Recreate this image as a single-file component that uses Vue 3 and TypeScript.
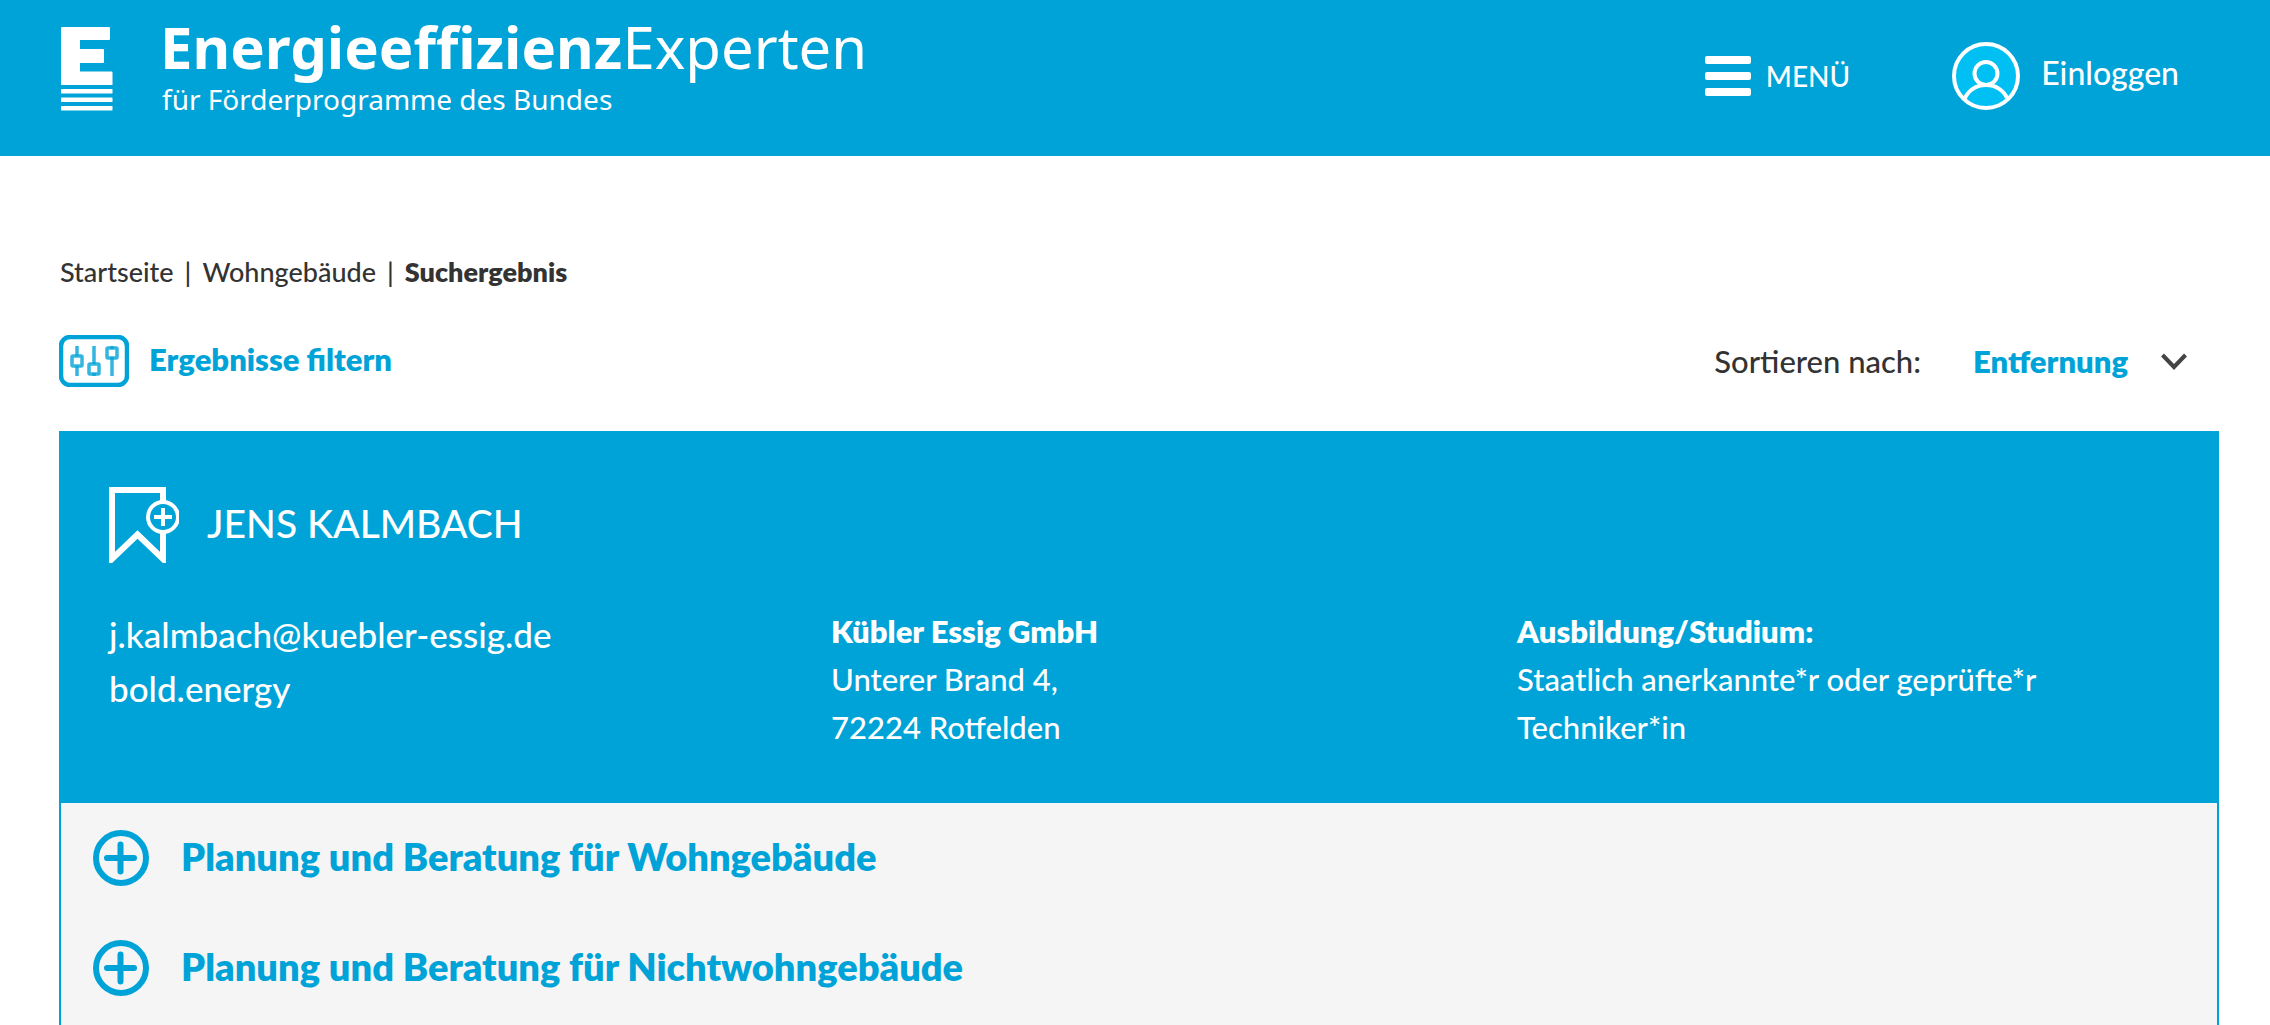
<script setup lang="ts">
const sections: string[] = [
  'Planung und Beratung für Wohngebäude',
  'Planung und Beratung für Nichtwohngebäude',
]
const sortOptions: string[] = ['Entfernung', 'Name', 'Ort']
</script>

<template>
  <div class="page">
    <header class="top">
      <a class="brand" href="#" aria-label="Startseite">
        <svg class="brand-mark" width="52" height="84" viewBox="0 0 52 84" fill="#fff" aria-hidden="true">
          <path d="M1 0H48q1 0 1 1V12q0 1-1 1H19V22H42q1 0 1 1V35q0 1-1 1H19V44.500H50.500q1 0 1 1V58H0V1Q0 0 1 0Z" />
          <rect y="62" width="51.500" height="4.500" rx=".5" />
          <rect y="70.500" width="51.500" height="4.500" rx=".5" />
          <rect y="79" width="51.500" height="4.500" rx=".5" />
        </svg>
        <span class="brand-text">
          <span class="brand-name"><b>Energieeffizienz</b>Experten</span>
          <span class="brand-sub">für Förderprogramme des Bundes</span>
        </span>
      </a>
      <nav class="actions">
        <button class="menu" type="button">
          <svg width="46" height="40" viewBox="0 0 46 40" fill="#fff" aria-hidden="true">
            <rect width="46" height="8" rx="2" />
            <rect y="16" width="46" height="8" rx="2" />
            <rect y="32" width="46" height="8" rx="2" />
          </svg>
          MENÜ
        </button>
        <a class="login" href="#">
          <svg width="68" height="68" viewBox="0 0 68 68" fill="none" stroke="#fff" stroke-width="4" aria-hidden="true">
            <circle cx="34" cy="34" r="32" fill="#00bff3" />
            <circle cx="34" cy="31.500" r="11.500" />
            <path d="M12.500 57C16 48.500 24 43 34 43S52 48.500 55.500 57" />
          </svg>
          <span>Einloggen</span>
        </a>
      </nav>
    </header>

    <main class="content">
      <nav class="crumbs" aria-label="Brotkrumen">
        <a href="#">Startseite</a><span>|</span><a href="#">Wohngebäude</a><span>|</span><strong>Suchergebnis</strong>
      </nav>

      <div class="toolbar">
        <button class="filter" type="button">
          <svg width="70" height="52" viewBox="0 0 70 52" fill="none" stroke="#00a3d7" aria-hidden="true">
            <rect x="2" y="2" width="66" height="48" rx="9" stroke-width="4.500" />
            <g stroke-width="3.500" stroke-opacity=".8">
              <path d="M18 11V21M18 31V41M35 11V29M53 22V41M53 11V14M35 38V41" />
              <rect x="13" y="21" width="10" height="10" rx="1" />
              <rect x="30" y="29" width="10" height="10" rx="1" />
              <rect x="48" y="13" width="10" height="10" rx="1" />
            </g>
          </svg>
          <span class="lift">Ergebnisse filtern</span>
        </button>
        <div class="sort">
          <label for="sort">Sortieren nach:</label>
          <span class="select">
            <select id="sort">
              <option v-for="o in sortOptions" :key="o">{{ o }}</option>
            </select>
            <svg width="26" height="17" viewBox="0 0 26 17" fill="none" stroke="#444" stroke-width="4" aria-hidden="true">
              <path d="M1.500 2L13 14L24.500 2" />
            </svg>
          </span>
        </div>
      </div>

      <article class="card">
        <div class="card-head">
          <div class="person">
            <button class="bookmark" type="button" aria-label="Merken">
              <svg width="70" height="76" viewBox="0 0 70 76" fill="none" stroke="#fff" aria-hidden="true">
                <path d="M54 14V3H3V72L28.500 47.500L54 72V46" stroke-width="6" />
                <circle cx="54" cy="30" r="15" stroke-width="4" />
                <path d="M54 21V39M45 30H63" stroke-width="4" />
              </svg>
            </button>
            <h2 class="lift">JENS KALMBACH</h2>
          </div>
          <div class="details">
            <div class="contact">
              <a href="#">j.kalmbach@kuebler-essig.de</a>
              <a href="#">bold.energy</a>
            </div>
            <address>
              <strong>Kübler Essig GmbH</strong><br />Unterer Brand 4,<br />72224 Rotfelden
            </address>
            <p>
              <strong>Ausbildung/Studium:</strong><br />Staatlich anerkannte*r oder geprüfte*r<br />Techniker*in
            </p>
          </div>
        </div>
        <div class="sections">
          <button v-for="s in sections" :key="s" type="button" class="section">
            <svg width="56" height="56" viewBox="0 0 56 56" fill="none" stroke="#00a3d7" aria-hidden="true">
              <circle cx="28" cy="28" r="25" stroke-width="6" />
              <path d="M27.500 14.500V41.500M14 28H41" stroke-width="6" stroke-linecap="round" />
            </svg>
            <span class="lift">{{ s }}</span>
          </button>
        </div>
      </article>
    </main>
  </div>
</template>

<style>
body {
  margin: 0;
  background: #fff;
}
</style>

<style scoped>
.page {
  height: 100vh;
  overflow: hidden;
  font-family: "Lato", sans-serif;
  font-size: 31px;
  font-weight: 500;
  line-height: 48px;
  color: #333;
}
a {
  color: inherit;
  text-decoration: none;
}
button {
  display: flex;
  align-items: center;
  padding: 0;
  border: 0;
  background: none;
  color: inherit;
  font: inherit;
  text-align: left;
  cursor: pointer;
}
svg {
  display: block;
  flex: none;
}
strong {
  font-weight: 800;
}
.lift {
  padding-bottom: 4px;
}
.top {
  display: flex;
  justify-content: space-between;
  align-items: flex-start;
  box-sizing: border-box;
  height: 156px;
  padding: 0 91px 0 61px;
  background: #00a3d7;
  color: #fff;
}
.brand {
  display: flex;
  gap: 47px;
  font-family: "Noto Sans", sans-serif;
  font-weight: 400;
}
.brand-mark {
  margin-top: 27px;
}
.brand-text {
  display: flex;
  flex-direction: column;
  padding-top: 15px;
}
.brand-name {
  font-size: 58px;
  line-height: 64px;
}
.brand-sub {
  padding-left: 2px;
  font-size: 28px;
  line-height: 40px;
}
.actions {
  display: flex;
  gap: 102px;
  padding-top: 42px;
}
.menu {
  height: 68px;
  gap: 15px;
  font-size: 28px;
}
.login {
  display: flex;
  align-items: center;
  gap: 21px;
  font-size: 32px;
}
.login span {
  padding-bottom: 6px;
}
.content {
  padding: 92px 51px 0 59px;
}
.crumbs {
  display: flex;
  gap: 11px;
  padding-left: 1px;
  font-size: 27px;
  line-height: 48px;
}
.toolbar {
  display: flex;
  justify-content: space-between;
  align-items: center;
  margin: 39px 0 44px;
  padding-right: 32px;
}
.filter {
  gap: 20px;
  color: #00a3d7;
  font-weight: 800;
}
.sort {
  display: flex;
  gap: 52px;
}
.select {
  display: flex;
  align-items: center;
  gap: 32px;
}
select {
  appearance: none;
  padding: 0;
  border: 0;
  background: none;
  color: #00a3d7;
  font: inherit;
  font-weight: 800;
}
.card {
  border: 2px solid #00a3d7;
  background: #f5f5f5;
}
.card-head {
  padding: 54px 48px 52px;
  background: #00a3d7;
  color: #fff;
}
.person {
  display: flex;
  align-items: center;
  gap: 28px;
}
h2 {
  margin: 0;
  font-size: 39px;
  font-weight: 500;
  line-height: 64px;
}
.details {
  display: grid;
  grid-template-columns: 722px 686px 1fr;
  margin-top: 44px;
}
.contact {
  display: flex;
  flex-direction: column;
  font-size: 35px;
  line-height: 54px;
}
address,
p {
  margin: 0;
  font-style: normal;
}
.sections {
  display: flex;
  flex-direction: column;
  gap: 54px;
  padding: 27px 32px 54px;
}
.section {
  gap: 32px;
  color: #00a3d7;
  font-size: 38px;
  font-weight: 800;
  line-height: 52px;
}
</style>
